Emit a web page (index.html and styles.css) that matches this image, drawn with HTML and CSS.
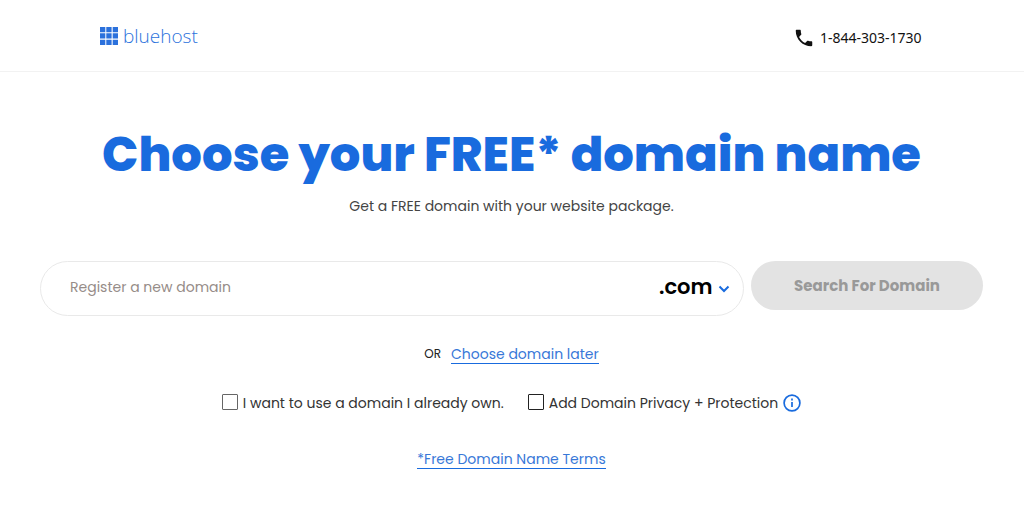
FILE: index.html
```html
<!DOCTYPE html>
<html lang="en">
<head>
    <meta charset="UTF-8">
    <meta name="viewport" content="width=device-width, initial-scale=1.0">
    <title>Choose your domain - Bluehost</title>
    <link rel="stylesheet" href="styles.css">
</head>
<body>
    <header class="header">
        <a class="logo" href="#">
            <svg width="18" height="18" viewBox="0 0 18 18" fill="currentColor" aria-hidden="true">
                <path d="M0 0h5.300v5.300H0zM6.300 0h5.300v5.300H6.300zM12.700 0H18v5.300h-5.300zM0 6.300h5.300v5.300H0zM6.300 6.300h5.300v5.300H6.300zM12.700 6.300H18v5.300h-5.300zM0 12.700h5.300V18H0zM6.300 12.700h5.300V18H6.300zM12.700 12.700H18V18h-5.300z"/>
            </svg>
            <span>bluehost</span>
        </a>
        <a class="phone" href="tel:18443031730">
            <svg width="22" height="22" viewBox="0 0 24 24" fill="currentColor" aria-hidden="true">
                <path d="M6.620 10.790c1.440 2.830 3.760 5.140 6.590 6.590l2.200-2.200c.27-.27.67-.36 1.020-.24 1.120.37 2.330.57 3.570.57.55 0 1 .45 1 1V20c0 .55-.45 1-1 1-9.390 0-17-7.610-17-17 0-.55.45-1 1-1h3.500c.55 0 1 .45 1 1 0 1.250.2 2.450.57 3.570.11.35.03.74-.25 1.020l-2.200 2.200z"/>
            </svg>
            <span>1-844-303-1730</span>
        </a>
    </header>

    <main class="main">
        <h1>Choose your FREE* domain name</h1>
        <p class="subtitle">Get a FREE domain with your website package.</p>

        <form class="search" action="javascript:void(0);">
            <div class="search-field">
                <input type="text" name="domain" class="domain-input" placeholder="Register a new domain" aria-label="Register a new domain">
                <select name="tld" class="tld" aria-label="Domain extension">
                    <option>.com</option>
                    <option>.net</option>
                    <option>.org</option>
                </select>
                <svg class="chevron" width="12" height="8" viewBox="0 0 12 8" fill="none" stroke="currentColor" stroke-width="2" aria-hidden="true">
                    <path d="M1.500 1.500L6 6l4.500-4.500"/>
                </svg>
            </div>
            <button type="submit" class="search-button" disabled>Search For Domain</button>
        </form>

        <div class="later">
            <span class="or">OR</span>
            <a class="link" href="#">Choose domain later</a>
        </div>

        <div class="options">
            <div class="option">
                <input type="checkbox" id="own" class="checkbox">
                <label for="own">I want to use a domain I already own.</label>
            </div>
            <div class="option">
                <input type="checkbox" id="privacy" class="checkbox checkbox-dark">
                <label for="privacy">Add Domain Privacy + Protection</label>
                <button type="button" class="info" aria-label="About domain privacy">
                    <svg width="18" height="18" viewBox="0 0 18 18" fill="none" stroke="currentColor" stroke-width="2" aria-hidden="true">
                        <circle cx="9" cy="9" r="7.900" stroke-width="1.700"/>
                        <path d="M9 8v5M9 4.500v2" stroke-width="1.700"/>
                    </svg>
                </button>
            </div>
        </div>

        <a class="link" href="#">*Free Domain Name Terms</a>
    </main>
</body>
</html>
```
FILE: styles.css
```css
* {
    box-sizing: border-box;
}

body {
    margin: 0;
    background-color: #fff;
    color: #333;
    font-family: Poppins, Inter, "Open Sans", sans-serif;
    font-size: 14px;
    line-height: 20px;
}

.header {
    display: flex;
    justify-content: space-between;
    align-items: center;
    padding: 20px 10% 20px 100px;
    min-height: 72px;
    border-bottom: 1px solid #f2f2f2;
}

.logo {
    display: flex;
    align-items: center;
    gap: 5px;
    color: #2b71dc;
    font-family: "Open Sans", sans-serif;
    font-size: 19px;
    font-weight: 300;
    text-decoration: none;
}

.phone {
    display: flex;
    align-items: center;
    gap: 5px;
    padding-top: 5px;
    color: #111;
    font-family: "Noto Sans", sans-serif;
    font-size: 14px;
    text-decoration: none;
}

.main {
    display: flex;
    flex-direction: column;
    align-items: center;
    padding: 53px 41px 52px 40px;
}

h1 {
    margin: 0;
    color: #196bde;
    font-size: 48px;
    font-weight: 800;
    line-height: 60px;
    text-align: center;
}

.subtitle {
    margin: 11px 0 0;
    color: #444;
}

.search {
    display: flex;
    align-items: flex-start;
    gap: 7px;
    width: 100%;
    margin-top: 45px;
}

.search-field {
    display: flex;
    flex: 1;
    align-items: center;
    min-width: 0;
    height: 55px;
    padding: 0 13px 4px 29px;
    border: 1px solid #e9e9e9;
    border-radius: 28px;
}

.domain-input {
    flex: 1;
    min-width: 0;
    padding: 0;
    border: none;
    outline: none;
    background: none;
    color: #333;
    font: inherit;
}

.domain-input::placeholder {
    color: #968c88;
}

.tld {
    appearance: none;
    padding: 0;
    border: none;
    outline: none;
    background: none;
    color: #000;
    font-family: inherit;
    font-size: 21px;
    font-weight: 600;
    cursor: pointer;
}

.chevron {
    margin: 4px 0 0 5px;
    color: #196bde;
}

.search-button {
    width: 232px;
    height: 49px;
    border: none;
    border-radius: 25px;
    background-color: #e3e3e3;
    color: #999;
    font-family: inherit;
    font-size: 15px;
    font-weight: 700;
}

.later {
    display: flex;
    align-items: center;
    gap: 10px;
    margin-top: 28px;
}

.or {
    color: #222;
    font-size: 12px;
}

.link {
    border-bottom: 1px solid #196bde;
    color: #3878d8;
    line-height: 18px;
    text-decoration: none;
}

.options {
    display: flex;
    flex-wrap: wrap;
    gap: 24px;
    margin: 29px 0 37px;
}

.option {
    display: flex;
    align-items: center;
    gap: 5px;
}

.checkbox {
    appearance: none;
    width: 16px;
    height: 16px;
    margin: 0 0 2px;
    border: 1px solid #666;
    border-radius: 1px;
}

.checkbox-dark {
    border-color: #222;
}

.checkbox:checked {
    background-color: #196bde;
}

.info {
    display: flex;
    padding: 0;
    border: none;
    background: none;
    color: #196bde;
    cursor: pointer;
}

@media (max-width: 700px) {
    .header {
        padding: 20px;
    }

    h1 {
        font-size: 36px;
        line-height: 44px;
    }

    .search {
        flex-direction: column;
    }

    .search-field {
        flex: none;
        width: 100%;
    }

    .search-button {
        width: 100%;
    }
}
```
